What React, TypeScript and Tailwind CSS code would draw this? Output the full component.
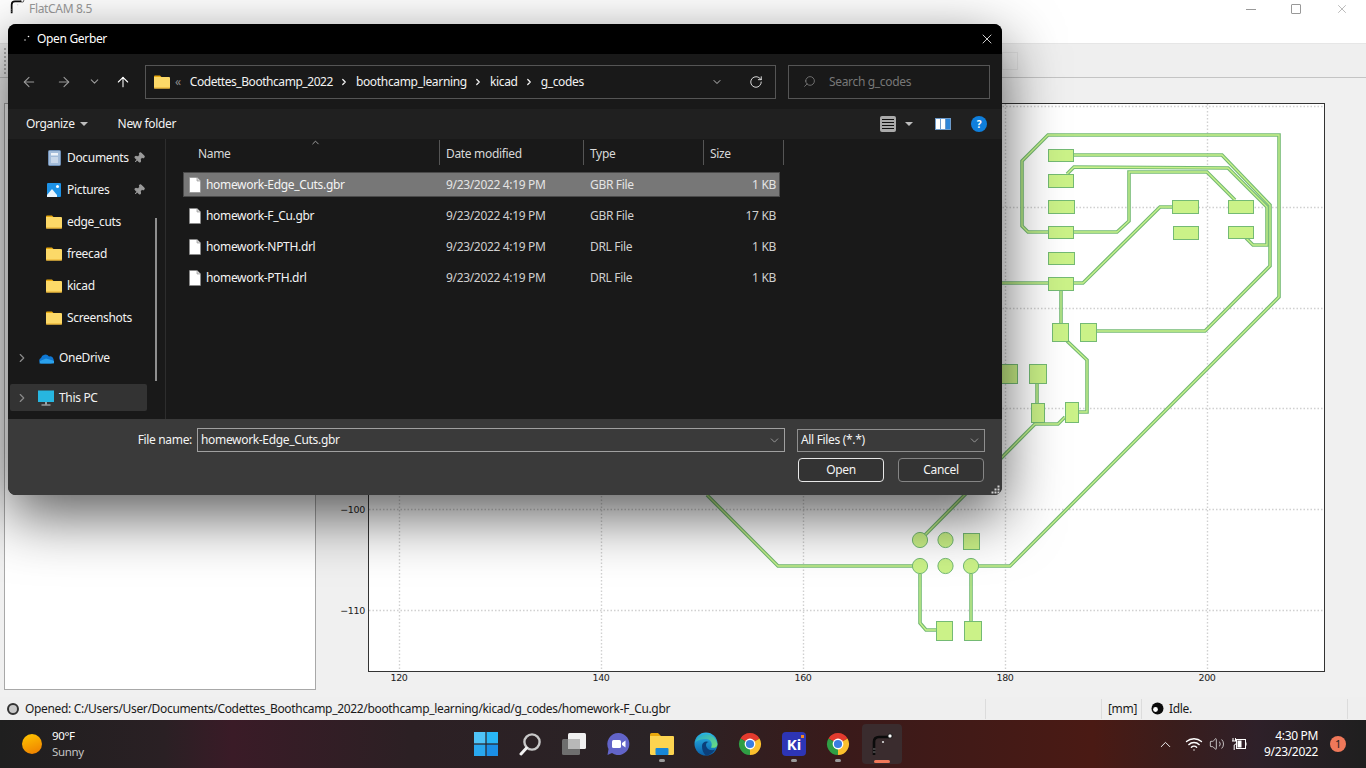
import { ArrowLeft, ArrowRight, ArrowUp, ChevronDown, ChevronRight, ChevronUp, Pin, RotateCw, Search, Volume2, Wifi, X } from 'lucide-react'

// board drawing, page coordinates
const traces = [
  '1048,232 1028,232 1022,226 1022,161 1048,135 1279,135 1279,297 1010,566 971,566',
  '1073,155 1222,155 1270,205 1270,266 1205,331 1096,331',
  '1067,174 1074,167 1228,168 1267,207 1267,245 1253,245 1246,238',
  '1073,232 1117,232 1129,221 1129,172 1207,172 1235,200',
  '1002,283 1083,283 1160,207 1172,207',
  '1061,290 1061,323',
  '1067,341 1087,360 1087,412 1078,412',
  '1037,383 1037,403',
  '925,535 1035,424 1058,424 1065,417',
  '707,495 778,566 920,566',
  '920,574 920,623 926,630 936,630',
  '971,574 971,621',
]

const pads = [
  [1048, 149, 25, 12],
  [1048, 174, 25, 13],
  [1048, 200, 26, 13],
  [1048, 226, 25, 12],
  [1048, 252, 26, 12],
  [1048, 277, 25, 13],
  [1172, 200, 26, 13],
  [1173, 226, 25, 13],
  [1228, 200, 25, 13],
  [1228, 226, 25, 12],
  [1052, 323, 16, 18],
  [1080, 323, 16, 18],
  [1001, 364, 16, 19],
  [1029, 364, 17, 19],
  [1031, 403, 13, 19],
  [1065, 402, 13, 20],
  [963, 533, 16, 16],
  [936, 621, 16, 19],
  [964, 621, 17, 19],
]

const holes = [
  [920, 540],
  [945.5, 540],
  [920, 566],
  [945.5, 566],
  [971, 566],
]

const gridX = [399, 601, 803, 1005, 1207]
const gridY = [106, 207, 308, 408, 509, 610]
const labelsX = [
  [399, '120'],
  [601, '140'],
  [803, '160'],
  [1005, '180'],
  [1207, '200'],
] as const

const files = [
  { name: 'homework-Edge_Cuts.gbr', type: 'GBR File', size: '1 KB', selected: true },
  { name: 'homework-F_Cu.gbr', type: 'GBR File', size: '17 KB' },
  { name: 'homework-NPTH.drl', type: 'DRL File', size: '1 KB' },
  { name: 'homework-PTH.drl', type: 'DRL File', size: '1 KB' },
]

function PlotCanvas() {
  return (
    <svg width="1026" height="619" viewBox="340 78 1026 619" className="ml-[24px] shrink-0">
      <rect x="368.5" y="103.5" width="956" height="568" fill="#fff" stroke="#333" />
      {gridX.map((x) => (
        <line key={x} x1={x + 0.5} x2={x + 0.5} y1="104" y2="671" stroke="#d0d0d0" strokeWidth="1.4" strokeDasharray="1.5 2" />
      ))}
      {gridY.map((y) => (
        <line key={y} y1={y + 0.5} y2={y + 0.5} x1="369" x2="1324" stroke="#d0d0d0" strokeWidth="1.4" strokeDasharray="1.5 2" />
      ))}
      {traces.map((t) => (
        <polyline key={t} points={t} fill="none" stroke="#74ba74" strokeWidth="3.6" />
      ))}
      {traces.map((t) => (
        <polyline key={t} points={t} fill="none" stroke="#c9f28a" strokeWidth="1.3" />
      ))}
      {pads.map(([x, y, w, h]) => (
        <rect key={`${x}-${y}`} x={x + 0.5} y={y + 0.5} width={w} height={h} fill="#cbf288" stroke="#74ba74" />
      ))}
      {holes.map(([x, y]) => (
        <circle key={`${x}-${y}`} cx={x} cy={y} r="7.6" fill="#cbf288" stroke="#74ba74" />
      ))}
      {labelsX.map(([x, label]) => (
        <text key={x} x={x} y="681" textAnchor="middle" fontSize="9.5" fontFamily="DejaVu Sans, sans-serif" fill="#222">
          {label}
        </text>
      ))}
      <text x="365" y="513" textAnchor="end" fontSize="9.5" fontFamily="DejaVu Sans, sans-serif" fill="#222">
        −100
      </text>
      <text x="365" y="614" textAnchor="end" fontSize="9.5" fontFamily="DejaVu Sans, sans-serif" fill="#222">
        −110
      </text>
    </svg>
  )
}

function FlatcamGlyph({ size = 24 }: { size?: number }) {
  return (
    <svg width={size} height={size} viewBox="0 0 24 24" fill="none">
      <path d="M4 23V10Q4 5 9 5H19" stroke="#0b0b0b" strokeWidth="2.6" />
      <path d="M3 17h2.5M3 20h2.5" stroke="#777" strokeWidth="1" />
      <circle cx="20" cy="4" r="2.2" fill="#fff" stroke="#111" />
      <circle cx="13" cy="10" r="1.1" fill="#ddd" />
    </svg>
  )
}

function FolderIcon({ size = 16 }: { size?: number }) {
  return (
    <svg width={size} height={size} viewBox="0 0 16 16">
      <path d="M0 2.5A1 1 0 0 1 1 1.5H6L7.5 3H0Z" fill="#e9a90f" />
      <path d="M0 3H15A1 1 0 0 1 16 4V13.5A1 1 0 0 1 15 14.5H1A1 1 0 0 1 0 13.5Z" fill="#fcd968" />
      <rect x="0" y="13.5" width="16" height="1" fill="#e6ab2b" />
    </svg>
  )
}

function FileIcon() {
  return (
    <svg width="12" height="16" viewBox="0 0 12 16">
      <path d="M.5.5H8L11.5 4V15.5H.5Z" fill="#fff" stroke="#8a8a8a" strokeWidth=".6" />
      <path d="M8 .5V4H11.5" fill="#d8d8d8" stroke="#8a8a8a" strokeWidth=".6" />
    </svg>
  )
}

function DocumentsIcon() {
  return (
    <svg width="13" height="16" viewBox="0 0 13 16">
      <rect x=".5" y=".5" width="12" height="15" rx="1" fill="#a3bcd9" stroke="#6f8fb5" />
      <rect x="3" y="3" width="7" height="2.5" fill="#eef3f9" />
      <path d="M3 8H10M3 10H10M3 12H10" stroke="#eef3f9" />
    </svg>
  )
}

function PicturesIcon() {
  return (
    <svg width="14" height="14" viewBox="0 0 14 14">
      <rect width="14" height="14" rx="1" fill="#1d92e6" />
      <circle cx="10.5" cy="3.5" r="1.5" fill="#fff" />
      <path d="M0 12L5 6L10 12V14H0Z" fill="#eaf5fd" />
    </svg>
  )
}

function OneDriveIcon() {
  return (
    <svg width="16" height="11" viewBox="0 0 16 11">
      <path d="M3 10.5A3 3 0 0 1 3 5A4.5 4.5 0 0 1 11 3.5A3.5 3.5 0 0 1 13 10.5Z" fill="#0f78d4" />
      <path d="M1.5 10.5H14.5A1.5 1.5 0 0 0 15 7.5L8 5.5L2 8Z" fill="#2aa1ec" />
    </svg>
  )
}

function ThisPcIcon() {
  return (
    <svg width="16" height="16" viewBox="0 0 16 16">
      <rect y="0.5" width="16" height="11.5" fill="#27b6e0" />
      <rect x="7" y="12" width="2" height="2.5" fill="#9aa3a8" />
      <rect x="3.5" y="14.5" width="9" height="1" fill="#c4cacd" />
    </svg>
  )
}

function ChromeIcon() {
  return (
    <svg width="24" height="24" viewBox="0 0 24 24">
      <path d="M12 12L2.47 6.5A11 11 0 0 1 21.53 6.5Z" fill="#e33b2e" />
      <path d="M12 12L21.53 6.5A11 11 0 0 1 12 23Z" fill="#fbc02d" />
      <path d="M12 12L12 23A11 11 0 0 1 2.47 6.5Z" fill="#2f9e44" />
      <circle cx="12" cy="12" r="5.4" fill="#fff" />
      <circle cx="12" cy="12" r="4.1" fill="#3b7de0" />
    </svg>
  )
}

function EdgeIcon() {
  return (
    <svg width="24" height="24" viewBox="0 0 24 24">
      <defs>
        <linearGradient id="edgeFill" x1="0" y1="0" x2="0" y2="1">
          <stop offset="0" stopColor="#2bb8e8" />
          <stop offset="1" stopColor="#0a5fa8" />
        </linearGradient>
        <linearGradient id="edgeTop" x1="0" y1="0" x2="1" y2="1">
          <stop offset="0" stopColor="#1fa6d8" />
          <stop offset="1" stopColor="#6fe07a" />
        </linearGradient>
      </defs>
      <circle cx="12" cy="12" r="11.5" fill="url(#edgeFill)" />
      <path d="M1 11A11.5 11.5 0 0 1 23.5 12C23.5 15.5 19.5 16.5 17 15.5C19 12 17 7 12 7C7 7 3 8 1 11Z" fill="url(#edgeTop)" />
      <path d="M8 14C8 10 12 8.5 15 10C11.5 10 11 14 14 17C16 18.5 19.5 18.5 21 17.5C19 21 15 23.5 12 23.5C9 21 8 18 8 14Z" fill="#0b3f7a" />
    </svg>
  )
}

function TaskIcon({ children, active, dot }: { children: React.ReactNode; active?: boolean; dot?: boolean }) {
  return (
    <div className={`relative mx-[2px] flex h-[40px] w-[40px] items-center justify-center rounded-[4px] ${active ? 'bg-[#3a2c2e]' : ''}`}>
      {children}
      {dot && <span className="absolute bottom-[2px] h-[3px] w-[6px] rounded-full bg-[#9a9a9a]" />}
      {active && <span className="absolute bottom-[1px] h-[3px] w-[16px] rounded-full bg-[#f0785a]" />}
    </div>
  )
}

function SidebarRow({ icon, label, pinned }: { icon: React.ReactNode; label: string; pinned?: boolean }) {
  return (
    <div className="flex h-[32px] items-center text-[#f2f2f2]">
      <span className="ml-[38px] mr-[5px] flex w-[16px] justify-center">{icon}</span>
      <span>{label}</span>
      {pinned && <Pin size={12} className="absolute left-[125px] rotate-45 fill-[#9a9a9a] text-[#9a9a9a]" />}
    </div>
  )
}

function OpenDialog() {
  return (
    <div className="absolute left-[8px] top-[24px] flex h-[471px] w-[994px] flex-col overflow-hidden rounded-[8px] bg-[#191919] text-[12px] shadow-[0_20px_60px_rgba(0,0,0,0.65)]">
      {/* title bar */}
      <div className="flex h-[30px] shrink-0 items-center bg-black pl-[16px] pr-[7px] text-white">
        <svg width="6" height="8" viewBox="0 0 6 8" className="mr-[7px]">
          <circle cx="4.5" cy="1.5" r=".8" fill="#fff" />
          <circle cx="1" cy="5" r=".8" fill="#ccc" />
        </svg>
        <span>Open Gerber</span>
        <X size={16} strokeWidth={1.2} className="ml-auto" />
      </div>

      {/* address row */}
      <div className="flex h-[55px] shrink-0 items-center text-[#f2f2f2]">
        <ArrowLeft size={16} strokeWidth={1.6} className="ml-[13px] text-[#9a9a9a]" />
        <ArrowRight size={16} strokeWidth={1.6} className="ml-[19px] text-[#9a9a9a]" />
        <ChevronDown size={13} strokeWidth={2} className="ml-[16px] text-[#9a9a9a]" />
        <ArrowUp size={16} strokeWidth={1.6} className="ml-[14px] text-white" />
        <div className="ml-[14px] flex h-[34px] w-[631px] items-center border border-[#555] pl-[8px]">
          <FolderIcon />
          <span className="ml-[5px] text-[#8a8a8a]">«</span>
          <span className="ml-[9px] tracking-[-0.45px]">Codettes_Boothcamp_2022</span>
          <ChevronRight size={10} strokeWidth={3} className="mx-[6.5px]" />
          <span>boothcamp_learning</span>
          <ChevronRight size={10} strokeWidth={3} className="mx-[6.5px]" />
          <span>kicad</span>
          <ChevronRight size={10} strokeWidth={3} className="mx-[6.5px]" />
          <span>g_codes</span>
          <ChevronDown size={12} strokeWidth={1.5} className="ml-auto mr-[26px]" />
          <RotateCw size={14} strokeWidth={1.5} className="mr-[12px]" />
        </div>
        <div className="ml-[12px] flex h-[34px] w-[202px] items-center border border-[#555] pl-[14px] text-[#777]">
          <Search size={13} strokeWidth={1.4} className="-scale-x-100 text-[#888]" />
          <span className="ml-[13px]">Search g_codes</span>
        </div>
      </div>

      {/* command bar */}
      <div className="flex h-[30px] shrink-0 items-center bg-[#202020] pl-[18px] text-[#f2f2f2]">
        <span>Organize</span>
        <span className="ml-[5px] h-0 w-0 border-x-[4px] border-t-[4px] border-x-transparent border-t-[#bdbdbd]" />
        <span className="ml-[30px]">New folder</span>
        <span className="ml-auto flex h-[16px] w-[16px] flex-col justify-center gap-[2px] rounded-[2px] bg-[#aaa] px-[2px]">
          <span className="h-px bg-[#111]" />
          <span className="h-px bg-[#111]" />
          <span className="h-px bg-[#111]" />
          <span className="h-px bg-[#111]" />
        </span>
        <span className="ml-[9px] h-0 w-0 border-x-[4px] border-t-[4px] border-x-transparent border-t-[#bdbdbd]" />
        <span className="ml-[22px] flex h-[12px] w-[16px] bg-[#6d9ac9] p-px">
          <span className="h-full w-[4px] bg-white" />
          <span className="ml-px h-full w-[4px] bg-white" />
          <span className="ml-px h-full w-[4px] bg-[#2f86d8]" />
        </span>
        <span className="ml-[20px] mr-[15px] flex h-[16px] w-[16px] items-center justify-center rounded-full bg-[#0f7fdc] text-[10px] font-bold text-white">?</span>
      </div>

      {/* body */}
      <div className="flex min-h-0 flex-1">
        <div className="relative w-[158px] shrink-0 border-r border-[#2d2d2d] pt-[3px]">
          <div className="relative">
            <SidebarRow icon={<DocumentsIcon />} label="Documents" pinned />
            <SidebarRow icon={<PicturesIcon />} label="Pictures" pinned />
            <SidebarRow icon={<FolderIcon />} label="edge_cuts" />
            <SidebarRow icon={<FolderIcon />} label="freecad" />
            <SidebarRow icon={<FolderIcon />} label="kicad" />
            <SidebarRow icon={<FolderIcon />} label="Screenshots" />
          </div>
          <div className="mt-[8px] flex h-[32px] items-center text-[#f2f2f2]">
            <ChevronRight size={14} strokeWidth={2} className="ml-[7px] text-[#8a8a8a]" />
            <span className="ml-[9px] mr-[5px]"><OneDriveIcon /></span>
            OneDrive
          </div>
          <div className="ml-[2px] mt-[10px] flex h-[27px] w-[137px] items-center rounded-[2px] bg-[#333] text-[#f2f2f2]">
            <ChevronRight size={14} strokeWidth={2} className="ml-[5px] text-[#8a8a8a]" />
            <span className="ml-[9px] mr-[5px]"><ThisPcIcon /></span>
            This PC
          </div>
          <div className="absolute left-[147px] top-[79px] h-[163px] w-[2px] bg-[#8f8f8f]" />
        </div>

        <div className="min-w-0 flex-1 pl-[17px]">
          <div className="flex h-[27px] items-center text-[#d8d8d8]">
            <div className="relative h-[25px] w-[257px] border-r border-[#555] pl-[15px] leading-[27px]">
              Name
              <ChevronUp size={11} className="absolute left-[127px] top-[-3px] text-[#aaa]" />
            </div>
            <div className="h-[25px] w-[144px] border-r border-[#555] pl-[6px] leading-[27px]">Date modified</div>
            <div className="h-[25px] w-[120px] border-r border-[#555] pl-[6px] leading-[27px]">Type</div>
            <div className="h-[25px] w-[80px] border-r border-[#555] pl-[6px] leading-[27px]">Size</div>
          </div>
          <div className="mt-[6px] flex w-[597px] flex-col gap-[6px]">
            {files.map((f) => (
              <div key={f.name} className={`flex h-[25px] items-center border pl-[5px] ${f.selected ? 'border-[#4a4a4a] bg-[#777]' : 'border-transparent'}`}>
                <FileIcon />
                <span className="ml-[5px] w-[240px] text-[#f4f4f4]">{f.name}</span>
                <span className={`w-[144px] ${f.selected ? 'text-[#e4e4e4]' : 'text-[#cfcfcf]'}`}>9/23/2022 4:19 PM</span>
                <span className={`w-[110px] ${f.selected ? 'text-[#e4e4e4]' : 'text-[#cfcfcf]'}`}>{f.type}</span>
                <span className={`w-[76px] text-right ${f.selected ? 'text-[#e4e4e4]' : 'text-[#cfcfcf]'}`}>{f.size}</span>
              </div>
            ))}
          </div>
        </div>
      </div>

      {/* footer */}
      <div className="relative h-[76px] shrink-0 bg-[#3a3a3a] pt-[9px] text-[#f4f4f4]">
        <div className="flex items-center">
          <span className="w-[184px] text-right">File name:</span>
          <div className="ml-[5px] flex h-[24px] w-[588px] items-center justify-between border border-[#a0a0a0] pl-[3px] pr-[3px]">
            homework-Edge_Cuts.gbr
            <ChevronDown size={13} strokeWidth={1.3} className="text-[#bbb]" />
          </div>
          <div className="ml-[12px] flex h-[23px] w-[188px] items-center justify-between border border-[#8f8f8f] pl-[3px] pr-[3px]">
            All Files (*.*)
            <ChevronDown size={13} strokeWidth={1.3} className="text-[#bbb]" />
          </div>
        </div>
        <div className="ml-[790px] mt-[6px] flex gap-[14px]">
          <div className="flex h-[24px] w-[86px] items-center justify-center rounded-[4px] border-[1.5px] border-[#e8e8e8] bg-[#333]">Open</div>
          <div className="flex h-[24px] w-[86px] items-center justify-center rounded-[4px] border border-[#858585] bg-[#333]">Cancel</div>
        </div>
        <svg width="9" height="9" viewBox="0 0 9 9" className="absolute bottom-[1px] right-[2px]" fill="#d0d0d0">
          <rect x="6.5" y="0.5" width="2" height="2" />
          <rect x="3.5" y="3.5" width="2" height="2" />
          <rect x="6.5" y="3.5" width="2" height="2" />
          <rect x="0.5" y="6.5" width="2" height="2" />
          <rect x="3.5" y="6.5" width="2" height="2" />
          <rect x="6.5" y="6.5" width="2" height="2" />
        </svg>
      </div>
    </div>
  )
}

export default function App() {
  return (
    <div className="relative flex h-[768px] w-[1366px] flex-col overflow-hidden bg-[#f0f0f0] font-['Noto_Sans','Open_Sans',sans-serif] text-[12px] tracking-[-0.33px]">
      {/* flatcam window */}
      <div className="flex h-[44px] shrink-0 items-start border-b border-[#e6e6e6] bg-white">
        <span className="ml-[9px] mt-[-2px] overflow-hidden"><FlatcamGlyph size={16} /></span>
        <span className="ml-[4px] text-[#9a9a9a]">FlatCAM 8.5</span>
        <div className="ml-auto mr-[17px] mt-[2px] flex items-center text-[#8a8a8a]">
          <span className="h-px w-[10px] bg-[#999]" />
          <span className="ml-[35px] h-[10px] w-[10px] rounded-[1px] border border-[#999]" />
          <X size={14} strokeWidth={1} className="ml-[34px]" />
        </div>
      </div>
      <div className="flex h-[34px] shrink-0 items-center border-b border-[#c4c4c4] bg-[#efefef]">
        <span className="ml-[4px] h-[26px] w-[3px] border-l-2 border-dotted border-[#b0b0b0]" />
        <span className="ml-[995px] h-[18px] w-[16px] border border-[#e2e2e2]" />
      </div>
      <div className="flex h-[619px] shrink-0">
        <div className="ml-[4px] mt-[25px] mb-[7px] w-[312px] border border-[#a8a8a8] bg-white" />
        <PlotCanvas />
      </div>

      {/* status bar */}
      <div className="flex h-[23px] shrink-0 items-center bg-[#efefef] text-[#1a1a1a]">
        <div className="flex w-[985px] items-center pl-[7px]">
          <span className="h-[12px] w-[12px] rounded-full border-2 border-[#333] bg-[#c8c8c8]" />
          <span className="ml-[6px]">Opened: C:/Users/User/Documents/Codettes_Boothcamp_2022/boothcamp_learning/kicad/g_codes/homework-F_Cu.gbr</span>
        </div>
        <div className="h-[20px] w-[116px] border-l border-[#dcdcdc]" />
        <div className="h-[20px] w-[40px] border-l border-[#dcdcdc] pl-[6px] leading-[20px]">[mm]</div>
        <div className="flex h-[20px] w-[206px] items-center border-l border-[#dcdcdc] pl-[9px]">
          <svg width="13" height="13" viewBox="0 0 13 13">
            <circle cx="6.5" cy="6.5" r="6" fill="#0c0c0c" />
            <circle cx="4.5" cy="7.5" r="2.4" fill="#fff" />
          </svg>
          <span className="ml-[5px]">Idle.</span>
        </div>
        <div className="h-[20px] border-l border-[#dcdcdc]" />
      </div>

      {/* taskbar */}
      <div className="flex h-[48px] shrink-0 items-center bg-[linear-gradient(90deg,#1f1f1f_0%,#2a2024_12%,#3a1b27_17%,#2c2024_30%,#2a2326_48%,#3a1a1a_62%,#4a1a14_80%,#3a1d1c_86%,#2e2029_92%,#1f1f1f_100%)] text-white">
        <div className="flex w-[464px] shrink-0 items-center">
          <span className="ml-[22px] h-[20px] w-[20px] rounded-full bg-[linear-gradient(160deg,#ffc800,#ee7b00)]" />
          <div className="ml-[10px] flex flex-col text-[11.5px] leading-[16px]">
            <span>90°F</span>
            <span className="text-[#c4c4c4]">Sunny</span>
          </div>
        </div>
        <TaskIcon>
          <svg width="24" height="24" viewBox="0 0 24 24">
            <rect width="11.4" height="11.4" fill="#4fc3f7" />
            <rect x="12.6" width="11.4" height="11.4" fill="#29b6f6" />
            <rect y="12.6" width="11.4" height="11.4" fill="#29a8ef" />
            <rect x="12.6" y="12.6" width="11.4" height="11.4" fill="#1b8fe6" />
          </svg>
        </TaskIcon>
        <TaskIcon>
          <svg width="24" height="24" viewBox="0 0 24 24" fill="none">
            <circle cx="14" cy="10" r="7.6" stroke="#c8c8c8" strokeWidth="2.4" />
            <path d="M8.5 16L3 22" stroke="#f2f2f2" strokeWidth="3" strokeLinecap="round" />
          </svg>
        </TaskIcon>
        <TaskIcon>
          <svg width="24" height="22" viewBox="0 0 24 22">
            <rect x="6" y="0" width="18" height="16" rx="1.5" fill="#f0f0f0" />
            <rect x="0" y="6" width="18" height="16" rx="1.5" fill="#6e6e6e" />
            <rect x="6" y="6" width="12" height="10" fill="#b8b8b8" />
          </svg>
        </TaskIcon>
        <TaskIcon>
          <svg width="24" height="24" viewBox="0 0 24 24">
            <path d="M12.5 1A11 11 0 1 1 6 21L1.5 23L2.5 17A11 11 0 0 1 12.5 1Z" fill="#6264c8" />
            <rect x="6" y="8" width="9" height="8" rx="1.5" fill="#fff" />
            <path d="M16 11L19.5 8.5V15.5L16 13Z" fill="#fff" />
          </svg>
        </TaskIcon>
        <TaskIcon dot>
          <svg width="24" height="22" viewBox="0 0 24 22">
            <path d="M0 1.5A1.5 1.5 0 0 1 1.5 0H8L11 3H0Z" fill="#e8a80c" />
            <path d="M0 3H23A1 1 0 0 1 24 4V20.5A1.5 1.5 0 0 1 22.5 22H1.5A1.5 1.5 0 0 1 0 20.5Z" fill="#fcd450" />
            <rect x="5.5" y="15" width="13" height="7" rx="1" fill="#1787d8" />
          </svg>
        </TaskIcon>
        <TaskIcon>
          <EdgeIcon />
        </TaskIcon>
        <TaskIcon>
          <ChromeIcon />
        </TaskIcon>
        <TaskIcon dot>
          <div className="relative flex h-[24px] w-[24px] items-center justify-center rounded-[4px] bg-[#2d35b5] text-[15px] font-bold tracking-normal text-white">
            Ki
            <span className="absolute right-[2px] top-[3px] h-[3px] w-[3px] bg-[#f08a24]" />
          </div>
        </TaskIcon>
        <TaskIcon dot>
          <ChromeIcon />
        </TaskIcon>
        <TaskIcon active>
          <FlatcamGlyph />
        </TaskIcon>

        <div className="ml-auto flex items-center">
          <ChevronUp size={17} strokeWidth={1.4} className="text-[#f0f0f0]" />
          <Wifi size={18} strokeWidth={1.8} className="ml-[11px]" />
          <Volume2 size={16} strokeWidth={1.2} className="ml-[6px] text-[#e8e8e8]" />
          <svg width="15" height="12" viewBox="0 0 15 12" className="ml-[7px]" fill="none">
            <rect x="4.5" y="1.5" width="9" height="9" stroke="#fff" />
            <rect x="5.5" y="2.5" width="4" height="7" fill="#fff" />
            <path d="M14 4.5V7.5" stroke="#fff" />
            <path d="M1 0V3M3.5 0V3M0 3H4.5V5.5L2.2 7V12" stroke="#fff" />
          </svg>
          <div className="ml-[15px] flex w-[56px] flex-col items-end text-[12px] leading-[16px]">
            <span>4:30 PM</span>
            <span>9/23/2022</span>
          </div>
          <span className="ml-[12px] mr-[20px] flex h-[16px] w-[16px] items-center justify-center rounded-full bg-[#f0785a] text-[11px] text-[#222]">1</span>
        </div>
      </div>

      <OpenDialog />
    </div>
  )
}
